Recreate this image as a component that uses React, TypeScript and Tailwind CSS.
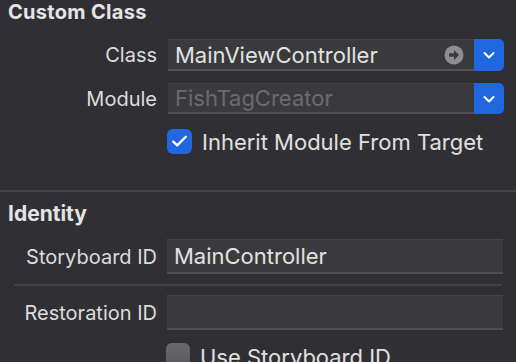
import { Check } from 'lucide-react'

function Chevron() {
  return (
    <svg width="14" height="10" viewBox="0 0 14 10" fill="none">
      <path d="M2.5 3 L7 7.5 L11.5 3" stroke="white" strokeWidth="2" strokeLinecap="round" strokeLinejoin="round" />
    </svg>
  )
}

function ArrowCircle() {
  return (
    <svg width="20" height="20" viewBox="0 0 20 20">
      <circle cx="10" cy="10" r="9.5" fill="#8e8e90" />
      <path d="M5 8.2 H10 V5 L15 10 L10 15 V11.8 H5 Z" fill="#3b3b3e" />
    </svg>
  )
}

function Field({ value, muted, className }: { value?: string; muted?: boolean; className?: string }) {
  return (
    <div
      className={
        'flex items-center bg-[#3a3a3d] border-t border-t-[#454548] border-b-2 border-b-[#505053] px-[7px] text-[22px] ' +
        (className ?? '')
      }
    >
      <span className={muted ? 'text-[#6b6b6e]' : 'text-[#e2e2e3]'}>{value}</span>
    </div>
  )
}

export default function App() {
  return (
    <div
      className="w-[516px] h-[362px] overflow-hidden bg-[#303034] text-[20px] text-[#dcdcdd] leading-none"
      style={{ fontFamily: 'Inter, "Noto Sans", sans-serif' }}
    >
      {/* Custom Class */}
      <div className="px-2 h-[24px] flex items-center font-bold text-[20px] tracking-[0.3px] text-[#e4e4e5]">
        Custom Class
      </div>

      <div className="mt-[15px] flex items-center h-[32px]">
        <div className="w-[157px] text-right">Class</div>
        <div className="ml-[11px] flex h-full">
          <div className="w-[306px] flex items-center justify-between bg-[#3a3a3d] border-t border-t-[#454548] border-b-2 border-b-[#505053] pl-[7px] pr-[10px] text-[22px]">
            <span className="text-[#e2e2e3]">MainViewController</span>
            <ArrowCircle />
          </div>
          <div className="w-[30px] bg-[#1f67dd] rounded-r-[5px] flex items-center justify-center">
            <Chevron />
          </div>
        </div>
      </div>

      <div className="mt-[12px] flex items-center h-[31px]">
        <div className="w-[157px] text-right">Module</div>
        <div className="ml-[11px] flex h-full">
          <Field value="FishTagCreator" muted className="w-[306px]" />
          <div className="w-[30px] bg-[#1f67dd] rounded-r-[5px] flex items-center justify-center">
            <Chevron />
          </div>
        </div>
      </div>

      <div className="mt-[15px] flex items-center h-[25px] pl-[167px] gap-[10px]">
        <div className="w-[25px] h-[25px] rounded-[6px] bg-[#2168e0] flex items-center justify-center">
          <Check className="w-[19px] h-[19px] text-white" strokeWidth={3} />
        </div>
        <span className="text-[22px] text-[#e0e0e1]">Inherit Module From Target</span>
      </div>

      {/* divider */}
      <div className="mt-[36px] h-[2px] bg-[#46464a]" />

      {/* Identity */}
      <div className="mt-[10px] px-2 h-[22px] flex items-center font-bold text-[21px] text-[#e4e4e5]">
        Identity
      </div>

      <div className="mt-[15px] flex items-center h-[35px]">
        <div className="w-[157px] text-right">Storyboard ID</div>
        <Field value="MainController" className="ml-[10px] w-[336px] h-full" />
      </div>

      <div className="mt-[10px] ml-[14px] w-[488px] h-[2px] bg-[#424246]" />

      <div className="mt-[9px] flex items-center h-[35px]">
        <div className="w-[157px] text-right">Restoration ID</div>
        <Field className="ml-[10px] w-[336px] h-full" />
      </div>

      <div className="mt-[13px] flex items-start h-[25px] pl-[166px] gap-[10px]">
        <div className="w-[24px] h-[24px] rounded-[6px] bg-gradient-to-b from-[#6a6a6d] to-[#59595c]" />
        <span className="text-[22px] text-[#e0e0e1] pt-[3px]">Use Storyboard ID</span>
      </div>
    </div>
  )
}
